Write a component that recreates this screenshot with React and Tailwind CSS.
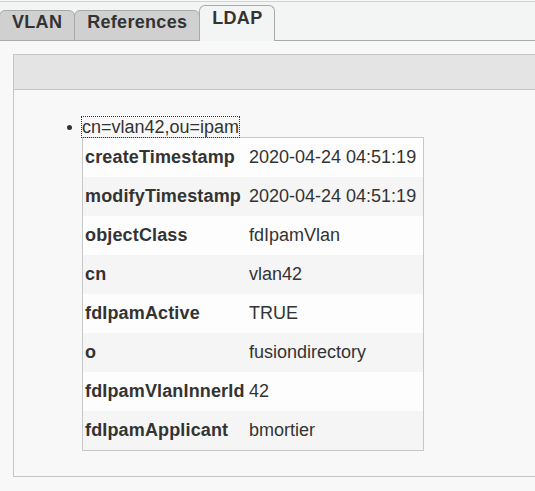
import React from 'react';

const ATTRS = [
  ['createTimestamp', '2020-04-24 04:51:19'],
  ['modifyTimestamp', '2020-04-24 04:51:19'],
  ['objectClass', 'fdIpamVlan'],
  ['cn', 'vlan42'],
  ['fdIpamActive', 'TRUE'],
  ['o', 'fusiondirectory'],
  ['fdIpamVlanInnerId', '42'],
  ['fdIpamApplicant', 'bmortier'],
];

function Tab({ label, active }) {
  if (active) {
    return (
      <div className="h-[36px] -ml-px border border-b-0 border-[#a9a9a9] rounded-t-[6px] bg-[#f3f4f4] px-3 pt-[2px] leading-[21px] font-bold tracking-[0.3px]">
        {label}
      </div>
    );
  }
  return (
    <div className="h-[31px] -ml-px border border-[#a9a9a9] rounded-t-[6px] bg-[#d0d0d0] px-3 pt-px leading-[21px] font-bold tracking-[0.3px]">
      {label}
    </div>
  );
}

export default function App() {
  return (
    <div className="min-h-screen overflow-hidden bg-[#f8f8f8] pt-px text-[18px] text-[#333] font-['Liberation_Sans',Arial,sans-serif]">
      <div className="h-[40px] flex items-end border-t border-[#d2d2d2] bg-[#f3f4f4]">
        <Tab label="VLAN" />
        <Tab label="References" />
        <Tab label="LDAP" active />
        <div className="flex-1 border-b border-[#a9a9a9]" />
      </div>

      <div className="pt-[13px] pl-[13px]">
        <div className="w-[560px] border border-[#c4c4c4]">
          <div className="h-[35px] bg-[#e4e4e4] border-b border-[#c4c4c4]" />
          <div className="pt-[26px] pb-[25px] flex">
            <div className="w-[68px] flex justify-end pr-[10px] pt-[9px]">
              <div className="w-[5px] h-[5px] rounded-full bg-[#333]" />
            </div>
            <div>
              <div className="leading-[20px] pt-px">
                <span className="outline outline-1 outline-dotted outline-[#333]">cn=vlan42,ou=ipam</span>
              </div>
              <div className="w-[342px] border border-[#c8c8c8]">
                {ATTRS.map(([k, v], i) => (
                  <div
                    key={k}
                    className={`h-[39px] flex items-center ${i % 2 ? 'bg-[#f5f5f5]' : 'bg-[#fdfdfd]'}`}
                  >
                    <div className="w-[166px] shrink-0 whitespace-nowrap pl-[2px] font-bold tracking-[0.15px]">{k}</div>
                    <div>{v}</div>
                  </div>
                ))}
              </div>
            </div>
          </div>
        </div>
      </div>
    </div>
  );
}
